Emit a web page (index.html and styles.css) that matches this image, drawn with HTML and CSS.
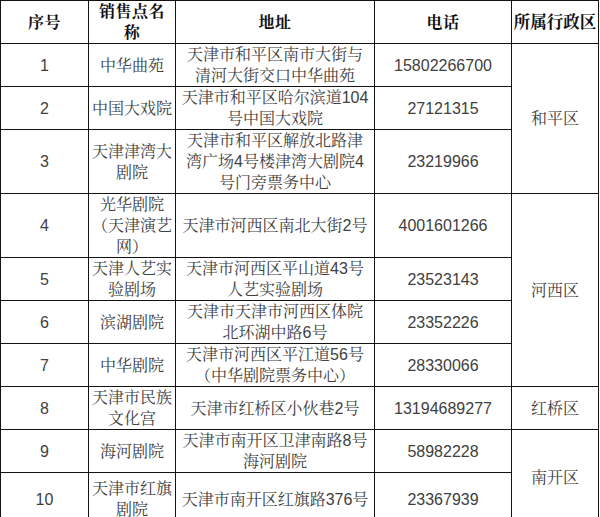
FILE: index.html
```html
<!DOCTYPE html>
<html lang="zh-CN">
<head>
<meta charset="utf-8">
<title>销售点</title>
<link rel="stylesheet" href="styles.css">
</head>
<body>
<table class="sites">
  <colgroup>
    <col class="c-no">
    <col class="c-name">
    <col class="c-addr">
    <col class="c-tel">
    <col class="c-dist">
  </colgroup>
  <thead>
    <tr>
      <th>序号</th>
      <th>销售点名<br>称</th>
      <th>地址</th>
      <th>电话</th>
      <th class="tight">所属行政区</th>
    </tr>
  </thead>
  <tbody>
    <tr class="r2">
      <td>1</td>
      <td>中华曲苑</td>
      <td>天津市和平区南市大街与<br>清河大街交口中华曲苑</td>
      <td>15802266700</td>
      <td rowspan="3">和平区</td>
    </tr>
    <tr class="r2">
      <td>2</td>
      <td>中国大戏院</td>
      <td>天津市和平区哈尔滨道104<br>号中国大戏院</td>
      <td>27121315</td>
    </tr>
    <tr class="r3">
      <td>3</td>
      <td>天津津湾大<br>剧院</td>
      <td>天津市和平区解放北路津<br>湾广场4号楼津湾大剧院4<br>号门旁票务中心</td>
      <td>23219966</td>
    </tr>
    <tr class="r3">
      <td>4</td>
      <td>光华剧院<br>（天津演艺<br>网）</td>
      <td>天津市河西区南北大街2号</td>
      <td>4001601266</td>
      <td rowspan="4">河西区</td>
    </tr>
    <tr class="r2">
      <td>5</td>
      <td>天津人艺实<br>验剧场</td>
      <td>天津市河西区平山道43号<br>人艺实验剧场</td>
      <td>23523143</td>
    </tr>
    <tr class="r2">
      <td>6</td>
      <td>滨湖剧院</td>
      <td>天津市天津市河西区体院<br>北环湖中路6号</td>
      <td>23352226</td>
    </tr>
    <tr class="r2">
      <td>7</td>
      <td>中华剧院</td>
      <td>天津市河西区平江道56号<br>（中华剧院票务中心）</td>
      <td>28330066</td>
    </tr>
    <tr class="r2">
      <td>8</td>
      <td>天津市民族<br>文化宫</td>
      <td>天津市红桥区小伙巷2号</td>
      <td>13194689277</td>
      <td>红桥区</td>
    </tr>
    <tr class="r2">
      <td>9</td>
      <td>海河剧院</td>
      <td>天津市南开区卫津南路8号<br>海河剧院</td>
      <td>58982228</td>
      <td rowspan="2">南开区</td>
    </tr>
    <tr class="r-last">
      <td>10</td>
      <td>天津市红旗<br>剧院</td>
      <td>天津市南开区红旗路376号</td>
      <td>23367939</td>
    </tr>
  </tbody>
</table>
</body>
</html>
```
FILE: styles.css
```css
html, body {
  margin: 0;
  padding: 0;
  background: #fff;
}
body {
  width: 600px;
  height: 517px;
  overflow: hidden;
}
.sites {
  table-layout: fixed;
  width: 598px;
  border-collapse: collapse;
  font-family: "Liberation Sans", "Noto Serif CJK SC", "Noto Sans CJK SC", sans-serif;
  font-size: 16px;
  line-height: 21px;
  color: #404040;
}
.c-no { width: 88px; }
.c-name { width: 87px; }
.c-addr { width: 199px; }
.c-tel { width: 137px; }
.c-dist { width: 87px; }
.sites th,
.sites td {
  border: 1px solid #111;
  padding: 0 3px;
  text-align: center;
  vertical-align: middle;
  white-space: nowrap;
}
.sites th {
  font-weight: bold;
  color: #111;
  height: 42px;
  letter-spacing: 0.5px;
}
.sites th.tight {
  padding: 0;
  letter-spacing: 0;
  font-size: 16.5px;
}
.r2 td { height: 42px; }
.r3 td { height: 63px; }
.r-last td { height: 52px; }
```
